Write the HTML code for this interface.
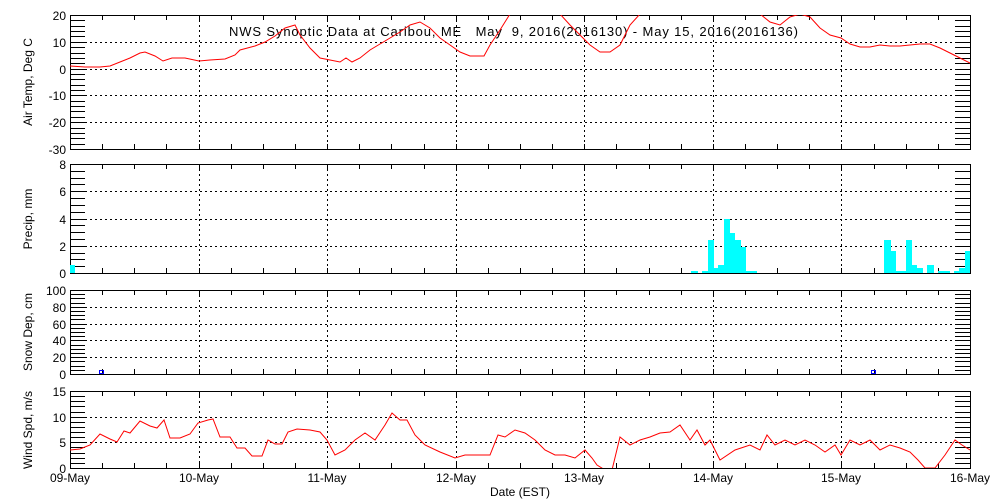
<!DOCTYPE html>
<html><head><meta charset="utf-8"><style>
html,body{margin:0;padding:0;background:#fff;}
svg{display:block;font-family:"Liberation Sans",sans-serif;}
</style></head><body>
<svg id="s" width="1000" height="500" xmlns="http://www.w3.org/2000/svg">
<defs>
<clipPath id="c1"><rect x="70" y="15" width="900" height="134"/></clipPath>
<clipPath id="c4"><rect x="70" y="391" width="900" height="77"/></clipPath>
</defs>
<g id="g"></g>
<text x="229" y="36" font-size="13" style="white-space:pre" xml:space="preserve" textLength="569" lengthAdjust="spacing">NWS Synoptic Data at Caribou, ME   May  9, 2016(2016130) - May 15, 2016(2016136)</text>
<polyline clip-path="url(#c1)" fill="none" stroke="#f00" stroke-width="1" points="70,66 85,67 100,67 110,66 120,62 130,58 140,53 145,52 155,56 163,61 172,58 185,58 199,61 210,60 225,59 235,55 240,50 255,46 265,42 275,36 285,28 295,25 300,35 310,48 320,58 330,60 340,62 346,58 352,62 360,58 370,50 380,44 390,38 400,32 410,25 420,22 430,28 440,38 450,45 460,52 470,56 484,56 490,45 500,30 510,14 520,5 545,5 560,14 570,25 580,35 590,45 600,52 610,52 620,45 630,25 640,14 660,5 740,5 760,14 770,22 780,25 790,17 800,14 810,17 820,28 830,35 841,38 850,44 860,47 870,47 880,45 890,46 900,46 910,45 920,44 930,44 940,48 950,53 960,58 970,63"/>
<g fill="#00ffff">
<rect x="70" y="265" width="5" height="8"/>
<rect x="691" y="271" width="7" height="2"/><rect x="702" y="271" width="6" height="2"/>
<rect x="708" y="240" width="6" height="33"/><rect x="714" y="268" width="4" height="5"/>
<rect x="718" y="265" width="6" height="8"/><rect x="724" y="219" width="6" height="54"/>
<rect x="730" y="233" width="5" height="40"/><rect x="735" y="240" width="6" height="33"/>
<rect x="741" y="247" width="5" height="26"/><rect x="746" y="271" width="11" height="2"/>
<rect x="884" y="240" width="7" height="33"/><rect x="891" y="251" width="5" height="22"/>
<rect x="896" y="271" width="10" height="2"/><rect x="906" y="240" width="6" height="33"/>
<rect x="912" y="265" width="5" height="8"/><rect x="917" y="268" width="6" height="5"/>
<rect x="927" y="265" width="7" height="8"/><rect x="938" y="271" width="12" height="2"/>
<rect x="954" y="271" width="5" height="2"/><rect x="959" y="268" width="6" height="5"/>
<rect x="965" y="251" width="5" height="22"/>
</g>
<rect x="99.5" y="370.5" width="4" height="3" fill="none" stroke="#00f"/>
<rect x="871.5" y="370.5" width="4" height="3" fill="none" stroke="#00f"/>
<polyline clip-path="url(#c4)" fill="none" stroke="#f00" points="70,450 80,449 90,445 100,434 110,439 117,442 124,431 130,433 140,421 150,426 157,428 164,420 170,438 180,438 190,434 198,423 208,420 213,419 220,437 230,437 237,448 245,448 252,456 262,456 268,440 275,444 282,444 288,432 297,429 310,430 320,432 327,440 335,455 345,450 355,440 365,433 375,440 385,425 392,413 400,420 407,420 415,435 425,445 440,452 455,458 465,455 475,455 490,455 498,435 505,437 515,430 525,433 535,440 545,450 555,455 565,455 575,458 585,450 592,458 597,465 605,470 612,470 620,437 630,445 640,440 650,437 660,433 670,432 680,425 690,440 697,430 705,445 710,440 720,460 735,450 750,445 760,450 767,435 775,445 785,440 795,445 805,440 815,445 825,452 835,445 841,455 850,440 860,445 870,440 880,450 890,445 900,448 910,452 918,460 925,468 935,468 945,455 955,440 962,445 970,450"/>
<g font-size="12" text-anchor="middle">
<text x="70" y="482">09-May</text><text x="199" y="482">10-May</text><text x="327" y="482">11-May</text>
<text x="456" y="482">12-May</text><text x="584" y="482">13-May</text><text x="713" y="482">14-May</text>
<text x="841" y="482">15-May</text><text x="970" y="482">16-May</text>
<text x="520" y="496">Date (EST)</text>
<text transform="translate(32,82) rotate(-90)">Air Temp, Deg C</text>
<text transform="translate(32,219) rotate(-90)">Precip, mm</text>
<text transform="translate(32,332) rotate(-90)">Snow Dep, cm</text>
<text transform="translate(32,430) rotate(-90)">Wind Spd, m/s</text>
</g>
</svg>
<script>
(function(){
var g=document.getElementById('g'),h='';
function L(x1,y1,x2,y2,d){h+='<line x1="'+x1+'" y1="'+y1+'" x2="'+x2+'" y2="'+y2+'" stroke="#000" stroke-width="1"'+(d?' stroke-dasharray="2,3"':'')+'/>';}
function T(x,y,t){h+='<text x="'+x+'" y="'+y+'" font-size="12" text-anchor="end">'+t+'</text>';}
var P=[{t:15,b:149,v0:-30,v1:20,minor:2,maj:[20,10,0,-10,-20,-30]},
{t:164,b:273,v0:0,v1:8,minor:0.5,maj:[8,6,4,2,0]},
{t:290,b:374,v0:0,v1:100,minor:5,maj:[100,80,60,40,20,0]},
{t:391,b:468,v0:0,v1:15,minor:1,maj:[15,10,5,0]}];
P.forEach(function(p){
 var Y=function(v){return p.b-(v-p.v0)/(p.v1-p.v0)*(p.b-p.t);};
 for(var v=p.v0;v<=p.v1+1e-6;v+=p.minor){var y=Math.round(Y(v))+.5;L(70,y,85,y);L(955,y,970,y);}
 p.maj.forEach(function(v){var y=Math.round(Y(v))+.5;T(66,Math.round(Y(v))+5,v);if(v!=p.v0&&v!=p.v1)L(85,y,955,y,1);});
 for(var i=1;i<7;i++){var x=Math.round(70+i*900/7)+.5;L(x,p.t,x,p.b,1);}
 for(var i=1;i<28;i++){var x=Math.round(70+i*900/28)+.5;L(x,p.t,x,p.t+5);L(x,p.b-5,x,p.b);}
 h+='<rect x="70.5" y="'+(p.t+.5)+'" width="900" height="'+(p.b-p.t)+'" fill="none" stroke="#000"/>';
});
g.innerHTML=h;
})();
</script>
</body></html>
